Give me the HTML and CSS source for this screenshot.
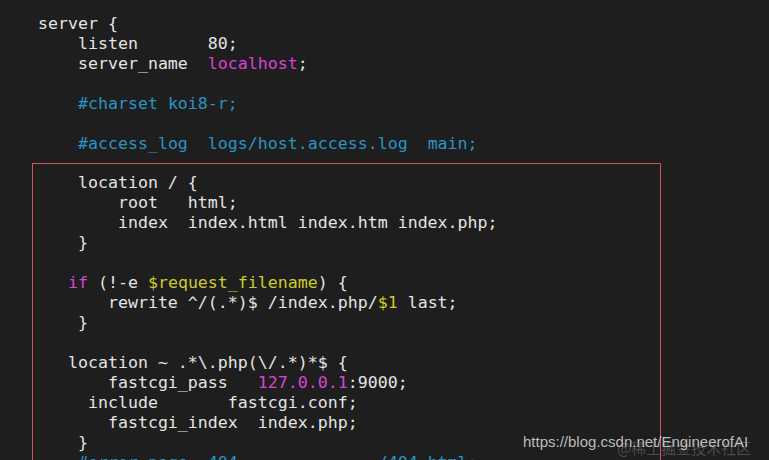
FILE: index.html
```html
<!DOCTYPE html>
<html>
<head>
<meta charset="utf-8">
<link rel="stylesheet" href="styles.css">
</head>
<body>
<div class="screen">
<pre class="code head">server {
    listen       80;
    server_name  <span class="m">localhost</span>;

    <span class="c">#charset koi8-r;</span>

    <span class="c">#access_log  logs/host.access.log  main;</span></pre>
<div class="mark">
<pre class="code">    location / {
        root   html;
        index  index.html index.htm index.php;
    }

   <span class="m">if</span> (!-e <span class="y">$request_filename</span>) {
       rewrite ^/(.*)$ /index.php/<span class="y">$1</span> last;
    }

   location ~ .*\.php(\/.*)*$ {
       fastcgi_pass   <span class="m">127.0.0.1</span>:9000;
     include       fastcgi.conf;
       fastcgi_index  index.php;
    }
    <span class="c">#error_page  404              /404.html;</span></pre>
</div>
<div class="wm">
<span class="wm-cn">@稀土掘金技术社区</span>
<span class="wm-url">https://blog.csdn.net/EngineerofAI</span>
</div>
</div>
</body>
</html>
```
FILE: styles.css
```css
html, body {
  margin: 0;
  padding: 0;
  background: #1e1e1e;
}
.screen {
  position: relative;
  width: 769px;
  height: 460px;
  overflow: hidden;
  background: #1e1e1e;
  padding: 14px 0 0 32px;
  box-sizing: border-box;
}
.code {
  margin: 0;
  font-family: "DejaVu Sans Mono", monospace;
  font-size: 16.6px;
  line-height: 20px;
  color: #e4e4e4;
  white-space: pre;
}
.head {
  padding-left: 6px;
}
.mark {
  margin-top: 9px;
  width: 622px;
  border: 1px solid #d2525a;
  border-bottom: none;
  padding: 9px 0 0 5px;
}
.m { color: #d844d6; }
.c { color: #2a94c6; }
.y { color: #cccc2c; }
.wm {
  position: absolute;
  left: 523px;
  top: 431px;
  width: 246px;
  height: 24px;
}
.wm-url {
  position: absolute;
  left: 0;
  top: 2px;
  font-family: "Liberation Sans", Arial, sans-serif;
  font-size: 15px;
  color: rgba(220, 220, 220, 0.85);
  white-space: nowrap;
}
.wm-cn {
  position: absolute;
  left: 94px;
  top: 6px;
  font-family: "Noto Sans CJK SC", sans-serif;
  font-size: 15px;
  color: rgba(200, 200, 200, 0.28);
  white-space: nowrap;
}
```
